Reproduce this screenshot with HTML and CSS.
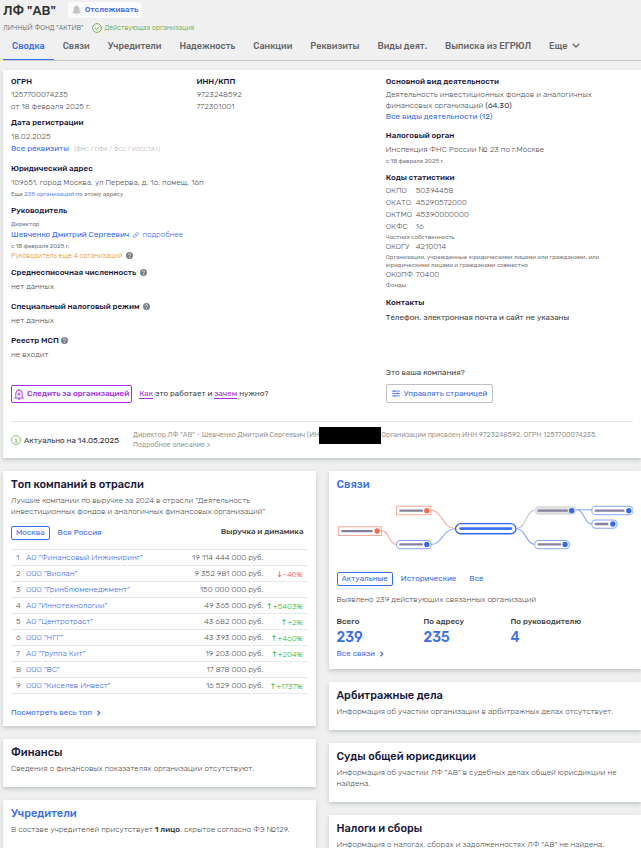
FILE: index.html
```html
<!DOCTYPE html>
<html lang="ru">
<head>
    <meta charset="UTF-8">
    <meta name="viewport" content="width=device-width, initial-scale=1.0">
    <title>ЛФ "АВ"</title>
    <link rel="stylesheet" href="styles.css">
</head>
<body>

    <!-- Shared icons -->
    <svg class="sprite" aria-hidden="true">
        <symbol id="help" viewBox="0 0 16 16">
            <circle cx="8" cy="8" r="8" fill="#7c828a"/>
            <path d="M5.5 6.2a2.5 2.5 0 1 1 3.6 2.2C8.300 8.800 8 9.100 8 10M8 11.500v1.500" fill="none" stroke="#fff" stroke-width="1.600"/>
        </symbol>
        <symbol id="arrow" viewBox="0 0 8 8">
            <path d="M2 1l3 3-3 3" fill="none" stroke="currentColor" stroke-width="1.500"/>
        </symbol>
    </svg>

    <header class="header">
        <div class="title-row">
            <h1>ЛФ "АВ"</h1>
            <button class="watch-btn" type="button">
                <svg class="icon-bell" viewBox="0 0 16 18"><path d="M8 0.500a1.300 1.300 0 0 1 1.300 1.500C12 2.600 13.300 4.800 13.300 7.500v3.800L15.500 14v.8H.5V14l2.200-2.700V7.500C2.700 4.800 4 2.600 6.700 2A1.300 1.300 0 0 1 8 .5zM6 15.700h4a2 2 0 0 1-4 0z" fill="#c4c4c4"/></svg>
                Отслеживать
            </button>
        </div>
        <div class="status-row">
            <span>ЛИЧНЫЙ ФОНД "АКТИВ"</span>
            <span class="status">
                <svg class="icon-status" viewBox="0 0 20 20" fill="none" stroke="#6cb33f" stroke-width="1.800"><circle cx="10" cy="10" r="8.800"/><path d="M6 10.200l3 2.800 5.500-5.500"/></svg>
                Действующая организация
            </span>
        </div>
    </header>

    <nav class="tabs">
        <a class="active" href="#">Сводка</a>
        <a href="#">Связи</a>
        <a href="#">Учредители</a>
        <a href="#">Надежность</a>
        <a href="#">Санкции</a>
        <a href="#">Реквизиты</a>
        <a href="#">Виды деят.</a>
        <a href="#">Выписка из ЕГРЮЛ</a>
        <a href="#">Еще <svg class="icon-chevron" viewBox="0 0 16 10"><path d="M1.500 1.500L8 8l6.500-6.500" fill="none" stroke="currentColor" stroke-width="2.600"/></svg></a>
    </nav>

    <main>
        <section class="card summary">
            <div class="summary-grid">
                <div class="summary-left">
                    <div class="ids">
                        <div class="block">
                            <h3>ОГРН</h3>
                            <p>1257700074235</p>
                            <p>от 18 февраля 2025 г.</p>
                        </div>
                        <div class="block">
                            <h3>ИНН/КПП</h3>
                            <p>9723248592</p>
                            <p>772301001</p>
                        </div>
                    </div>
                    <div class="block">
                        <h3>Дата регистрации</h3>
                        <p>18.02.2025</p>
                        <p class="requisites"><a href="#">Все реквизиты</a> <small>(ФНС / ПФР / ФСС / РОССТАТ)</small></p>
                    </div>
                    <div class="block tight">
                        <h3>Юридический адрес</h3>
                        <p>109651, город Москва, ул Перерва, д. 16, помещ. 16п</p>
                        <p class="note">Еще <a href="#">235 организаций</a> по этому адресу</p>
                    </div>
                    <div class="block tight">
                        <h3>Руководитель</h3>
                        <p class="note">Директор</p>
                        <p class="head-person">
                            <a href="#">Шевченко Дмитрий Сергеевич</a>
                            <a class="more" href="#"><svg class="icon-link" viewBox="0 0 16 16" fill="none" stroke="currentColor" stroke-width="1.800"><path d="M6.500 9.500a3 3 0 0 0 4.300 0l3-3a3 3 0 0 0-4.300-4.300L8 3.700M9.500 6.500a3 3 0 0 0-4.300 0l-3 3a3 3 0 0 0 4.300 4.300L8 12.300"/></svg> подробнее</a>
                        </p>
                        <p class="note">с 18 февраля 2025 г.</p>
                        <p class="note warn">Руководитель еще 4 организаций <svg class="icon-help"><use href="#help"/></svg></p>
                    </div>
                    <div class="block">
                        <h3>Среднесписочная численность <svg class="icon-help"><use href="#help"/></svg></h3>
                        <p>нет данных</p>
                    </div>
                    <div class="block">
                        <h3>Специальный налоговый режим <svg class="icon-help"><use href="#help"/></svg></h3>
                        <p>нет данных</p>
                    </div>
                    <div class="block">
                        <h3>Реестр МСП <svg class="icon-help close"><use href="#help"/></svg></h3>
                        <p>не входит</p>
                    </div>
                </div>

                <div class="summary-right">
                    <div class="block activity">
                        <h3>Основной вид деятельности</h3>
                        <p>Деятельность инвестиционных фондов и аналогичных финансовых организаций <span class="dark">(64.30)</span></p>
                        <p><a href="#">Все виды деятельности (12)</a></p>
                    </div>
                    <div class="block tight">
                        <h3>Налоговый орган</h3>
                        <p>Инспекция ФНС России № 23 по г.Москве</p>
                        <p class="note">с 18 февраля 2025 г.</p>
                    </div>
                    <div class="block codes">
                        <h3>Коды статистики</h3>
                        <p><span>ОКПО</span>50394458</p>
                        <p><span>ОКАТО</span>45290572000</p>
                        <p><span>ОКТМО</span>45390000000</p>
                        <p><span>ОКФС</span>16</p>
                        <p class="code-note">Частная собственность</p>
                        <p><span>ОКОГУ</span>4210014</p>
                        <p class="code-note">Организации, учрежденные юридическими лицами или гражданами, или юридическими лицами и гражданами совместно</p>
                        <p><span>ОКОПФ</span>70400</p>
                        <p class="code-note">Фонды</p>
                    </div>
                    <div class="block contacts">
                        <h3>Контакты</h3>
                        <p class="dark">Телефон, электронная почта и сайт не указаны</p>
                    </div>
                </div>

                <div class="follow">
                    <button class="follow-btn" type="button">
                        <svg class="icon-follow" viewBox="0 0 24 28" fill="none" stroke="currentColor" stroke-width="2.400"><path d="M4 22V11a8 8 0 0 1 16 0v11M0 23h24M12 0v3M9 26h6M12 9v8M8 13h8"/></svg>
                        Следить за организацией
                    </button>
                    <p class="dark"><a href="#">Как</a> это работает и <a href="#">зачем</a> нужно?</p>
                </div>
                <div class="manage">
                    <p class="dark">Это ваша компания?</p>
                    <button class="manage-btn" type="button">
                        <svg class="icon-manage" viewBox="0 0 24 20" fill="none" stroke="currentColor" stroke-width="2.400"><path d="M0 3h24M0 10h24M0 17h24M7 0v6M17 7v6M9 14v6"/></svg>
                        Управлять страницей
                    </button>
                </div>
            </div>

            <div class="actual">
                <div class="actual-date">
                    <svg class="icon-info" viewBox="0 0 28 28" fill="none" stroke="#6cb33f" stroke-width="2.200"><circle cx="14" cy="14" r="12.500"/><path d="M11 12h3.500v8M10.500 20h7.500M13 7.500h2.500"/></svg>
                    Актуально на 14.05.2025
                </div>
                <div class="actual-text">
                    <p>Директор ЛФ "АВ" - Шевченко Дмитрий Сергеевич (ИН<span class="redacted"></span>Организации присвоен ИНН 9723248592, ОГРН 1257700074235.</p>
                    <p><a href="#">Подробное описание &gt;</a></p>
                </div>
            </div>
        </section>

        <div class="columns">
            <div class="column">
                <section class="card top">
                    <h2>Топ компаний в отрасли</h2>
                    <p>Лучшие компании по выручке за 2024 в отрасли "Деятельность инвестиционных фондов и аналогичных финансовых организаций"</p>
                    <div class="top-head">
                        <div class="pills">
                            <button class="selected" type="button">Москва</button>
                            <button type="button">Вся Россия</button>
                        </div>
                        <strong>Выручка и динамика</strong>
                    </div>
                    <table>
                        <tr><td>1</td><td><a href="#">АО "Финансовый Инжиниринг"</a></td><td>19 114 444 000 руб.</td><td></td></tr>
                        <tr><td>2</td><td><a href="#">ООО "Виолан"</a></td><td>9 352 981 000 руб.</td><td class="down"><b>↓</b>-40%</td></tr>
                        <tr><td>3</td><td><a href="#">ООО "Гринблюменеджмент"</a></td><td>150 000 000 руб.</td><td></td></tr>
                        <tr><td>4</td><td><a href="#">АО "Иннотехнологии"</a></td><td>49 365 000 руб.</td><td class="up"><b>↑</b>+5403%</td></tr>
                        <tr><td>5</td><td><a href="#">АО "Центротраст"</a></td><td>43 682 000 руб.</td><td class="up"><b>↑</b>+2%</td></tr>
                        <tr><td>6</td><td><a href="#">ООО "НГГ"</a></td><td>43 393 000 руб.</td><td class="up"><b>↑</b>+460%</td></tr>
                        <tr><td>7</td><td><a href="#">АО "Группа Кит"</a></td><td>19 203 000 руб.</td><td class="up"><b>↑</b>+204%</td></tr>
                        <tr><td>8</td><td><a href="#">ООО "ВС"</a></td><td>17 878 000 руб.</td><td></td></tr>
                        <tr><td>9</td><td><a href="#">ООО "Киселев Инвест"</a></td><td>16 529 000 руб.</td><td class="up"><b>↑</b>+1737%</td></tr>
                    </table>
                    <a class="all-link" href="#">Посмотреть весь топ <svg class="icon-arrow"><use href="#arrow"/></svg></a>
                </section>

                <section class="card">
                    <h2>Финансы</h2>
                    <p>Сведения о финансовых показателях организации отсутствуют.</p>
                </section>

                <section class="card">
                    <h2><a href="#">Учредители</a></h2>
                    <p>В составе учредителей присутствует <b>1 лицо</b>, скрытое согласно ФЗ №129.</p>
                </section>
            </div>

            <div class="column">
                <section class="card links">
                    <h2><a href="#">Связи</a></h2>
                    <svg class="graph" viewBox="36 114 888 150" fill="none" stroke-width="3">
                        <g stroke="#f9a99b">
                            <path d="M318 136C352 136 352 191 390 191M170 197C194 197 190 238 213 238"/>
                            <path d="M214 124h103v25H214zM40 185h129v26H40z"/>
                        </g>
                        <g stroke="#82a5fb">
                            <path d="M318 238C352 238 352 191 390 191M573 191C602 191 602 238 628 238M752 134H799M752 134C779 134 775 177 799 177"/>
                            <rect x="214" y="226" width="104" height="25" rx="12"/>
                            <rect x="628" y="226" width="104" height="25" rx="12"/>
                            <rect x="799" y="124" width="124" height="25" rx="12"/>
                            <rect x="799" y="165" width="76" height="25" rx="12"/>
                        </g>
                        <path d="M573 191C602 191 602 136 628 136" stroke="#bdbdbd"/>
                        <rect x="628" y="123" width="125" height="27" rx="13" fill="#e0e0e0"/>
                        <rect x="391" y="176" width="181" height="30" rx="15" stroke="#3367f0" stroke-width="4"/>
                        <path d="M406 191H557" stroke="#3f70ee" stroke-width="8" stroke-linecap="round"/>
                        <path d="M226 137H290M52 198H140M226 238H290M640 137H724M640 238H704M811 137H894M811 177H846" stroke="#85819a" stroke-width="7" stroke-linecap="round"/>
                        <g fill="#f9694d">
                            <circle cx="305" cy="137" r="8"/>
                            <circle cx="156" cy="198" r="8"/>
                        </g>
                        <g fill="#3367f0">
                            <circle cx="305" cy="238" r="8"/>
                            <circle cx="739" cy="137" r="8"/>
                            <circle cx="719" cy="238" r="8"/>
                            <circle cx="910" cy="137" r="8"/>
                            <circle cx="862" cy="177" r="8"/>
                        </g>
                    </svg>
                    <div class="pills">
                        <button class="selected" type="button">Актуальные</button>
                        <button type="button">Исторические</button>
                        <button type="button">Все</button>
                    </div>
                    <p>Выявлено 239 действующих связанных организаций</p>
                    <div class="counts">
                        <div><strong>Всего</strong><a href="#">239</a></div>
                        <div><strong>По адресу</strong><a href="#">235</a></div>
                        <div><strong>По руководителю</strong><a href="#">4</a></div>
                    </div>
                    <a class="all-link" href="#">Все связи <svg class="icon-arrow"><use href="#arrow"/></svg></a>
                </section>

                <section class="card">
                    <h2>Арбитражные дела</h2>
                    <p>Информация об участии организации в арбитражных делах отсутствует.</p>
                </section>

                <section class="card">
                    <h2>Суды общей юрисдикции</h2>
                    <p>Информация об участии ЛФ "АВ" в судебных делах общей юрисдикции не найдена.</p>
                </section>

                <section class="card">
                    <h2>Налоги и сборы</h2>
                    <p>Информация о налогах, сборах и задолженностях ЛФ "АВ" не найдена.</p>
                </section>
            </div>
        </div>
    </main>

</body>
</html>
```

FILE: styles.css
```css
* {
    box-sizing: border-box;
}
body {
    margin: 0;
    padding-left: 3px;
    background: #f0f0f0;
    color: #505050;
    font-family: Rubik, Roboto, sans-serif;
    font-size: 8px;
    font-weight: 300;
    line-height: 11px;
}
h1, h2, h3, p {
    margin: 0;
}
a {
    color: #3a6df0;
    font-weight: 400;
    text-decoration: none;
}
button {
    font-family: inherit;
    font-size: 8px;
    line-height: 12px;
    cursor: pointer;
}
svg {
    flex: none;
}
.sprite {
    position: absolute;
    width: 0;
    height: 0;
}
.dark {
    color: #444;
    font-weight: 400;
}

/* Header */
.title-row {
    display: flex;
    align-items: center;
    gap: 12px;
    padding-top: 2px;
}
h1 {
    color: #333;
    font-size: 13px;
    line-height: 13px;
    font-weight: 500;
}
.watch-btn {
    display: flex;
    align-items: center;
    gap: 4px;
    padding: 2px 4px;
    border: 0;
    border-radius: 2px;
    background: #fafafa;
    color: #3a6df0;
    font-weight: 500;
}
.icon-bell {
    width: 9px;
    height: 10px;
}
.status-row {
    display: flex;
    gap: 9px;
    margin-top: 4px;
    font-size: 7px;
}
.status {
    display: flex;
    align-items: center;
    gap: 2px;
    color: #58a42a;
}
.icon-status {
    width: 10px;
    height: 10px;
}

/* Tabs */
.tabs {
    display: flex;
    margin-top: 6px;
    border-bottom: 1px solid #c8c8c8;
}
.tabs a {
    padding: 1px 9px 7px;
    color: #666;
    font-size: 9px;
    line-height: 12px;
    font-weight: 500;
    white-space: nowrap;
}
.tabs .active {
    color: #3a6df0;
    border-bottom: 1px solid #3a6df0;
}
.icon-chevron {
    width: 8px;
    height: 5px;
    margin: 0 0 1px 3px;
}

/* Cards */
.card {
    background: #fff;
    padding: 7px 8px 13px;
    box-shadow: 0 2px 4px rgba(60, 80, 90, 0.25);
}
h2 {
    margin-bottom: 4px;
    color: #17173a;
    font-size: 11px;
    line-height: 13px;
    font-weight: 500;
}
h2 a {
    font-weight: 500;
}

/* Summary */
.summary {
    margin-top: 9px;
    padding: 6px 8px 8px;
}
.summary-grid {
    display: grid;
    grid-template-columns: 3fr 2fr;
    column-gap: 4px;
}
.ids {
    display: grid;
    grid-template-columns: 1fr 1fr;
    margin-bottom: -4px;
}
.block {
    margin-bottom: 8px;
    line-height: 12px;
}
.block.tight {
    margin-bottom: 6px;
}
h3 {
    margin-bottom: 2px;
    color: #17173a;
    font-size: 8px;
    line-height: 12px;
    font-weight: 500;
}
.ids h3, .activity h3, .codes h3 {
    margin-bottom: 1px;
}
.requisites small {
    margin-left: 3px;
    color: #aaa;
    font-size: 6px;
}
.note, .code-note {
    color: #777;
    font-size: 6px;
    font-weight: 400;
    line-height: 10px;
}
.note a {
    color: #668cf2;
}
.note.warn {
    color: #e0903a;
    font-size: 7px;
    font-weight: 300;
}
.icon-help {
    width: 7px;
    height: 7px;
    margin-left: 2px;
    vertical-align: -1px;
}
.icon-help.close {
    margin-left: 0;
}
.icon-link {
    width: 6px;
    height: 6px;
    margin: 0 1px 0 2px;
    vertical-align: -1px;
}
.more {
    font-weight: 300;
}
.activity p {
    line-height: 11px;
}
.codes span {
    display: inline-block;
    width: 30px;
}
.code-note {
    line-height: 8px;
}
.contacts h3 {
    margin-bottom: 3px;
}
.follow {
    display: flex;
    align-items: flex-end;
    gap: 7px;
}
.follow p {
    padding-bottom: 4px;
}
.follow a {
    color: #a72ee6;
    border-bottom: 1px solid #a72ee6;
}
.follow-btn {
    display: flex;
    align-items: center;
    gap: 3px;
    padding: 2px;
    border: 1px solid #a72ee6;
    border-radius: 2px;
    background: #fff;
    color: #a72ee6;
    font-weight: 500;
}
.icon-follow {
    width: 10px;
    height: 11px;
}
.manage {
    padding-top: 1px;
}
.summary-left .block:last-child {
    margin-bottom: 5px;
}
.manage-btn {
    display: flex;
    align-items: center;
    gap: 4px;
    margin-top: 6px;
    padding: 2px 5px;
    border: 1px solid #c0c0c0;
    border-radius: 2px;
    background: #fff;
    color: #3a6df0;
    line-height: 13px;
}
.icon-manage {
    width: 8px;
    height: 7px;
}
.summary-left .ids .block:last-child {
    margin-bottom: 8px;
}
.actual {
    display: flex;
    align-items: center;
    gap: 14px;
    margin-top: 18px;
    padding-top: 8px;
    border-top: 1px solid #e3e6f0;
}
.actual-date {
    display: flex;
    align-items: center;
    gap: 3px;
    color: #333;
    font-weight: 400;
    white-space: nowrap;
}
.icon-info {
    width: 10px;
    height: 10px;
}
.actual-text, .actual-text a {
    color: #999;
    font-size: 7px;
    font-weight: 400;
    line-height: 10px;
}
.redacted {
    display: inline-block;
    width: 62px;
    height: 17px;
    margin: -4px 0;
    background: #000;
    vertical-align: middle;
}

/* Lower cards */
.columns {
    display: grid;
    grid-template-columns: 1fr 1fr;
    gap: 13px;
    margin-top: 13px;
}
.column {
    display: flex;
    flex-direction: column;
    gap: 13px;
}
.card b {
    color: #333;
    font-weight: 500;
}
.top-head {
    display: flex;
    justify-content: space-between;
    margin: 9px 4px 9px 0;
}
strong {
    color: #444;
    font-weight: 500;
}
.pills {
    display: flex;
    gap: 3px;
}
.pills button {
    padding: 0 4px;
    border: 1px solid transparent;
    border-radius: 2px;
    background: #fff;
    color: #3a6df0;
}
.pills .selected {
    border-color: #3a6df0;
}
.top {
    padding-bottom: 8px;
}
table {
    width: calc(100% - 1px);
    border-collapse: collapse;
    border-top: 1px solid #e8e8e8;
}
td {
    height: 16px;
    padding: 0;
    border-bottom: 1px solid #e8e8e8;
    white-space: nowrap;
}
td:first-child {
    width: 14px;
    padding: 0 5px;
}
td:nth-child(3), td:nth-child(4) {
    text-align: right;
}
td:nth-child(4) {
    width: 43px;
    padding-right: 4px;
}
td a {
    font-weight: 300;
}
td b {
    font-family: "Noto Sans", "DejaVu Sans", sans-serif;
}
.down, .card .down b {
    color: #f4513d;
}
.up, .card .up b {
    color: #22b838;
}
.all-link {
    display: block;
}
.top .all-link {
    margin-top: 13px;
}
.icon-arrow {
    width: 6px;
    height: 6px;
    margin-left: 2px;
    vertical-align: -1px;
}
.links {
    padding-bottom: 10px;
}
.graph {
    display: block;
    width: 100%;
    margin: 12px 0 19px;
}
.links p {
    margin-top: 8px;
}
.counts {
    display: grid;
    grid-template-columns: 87px 87px 1fr;
    margin: 11px 0 2px;
}
.counts a {
    display: block;
    margin-top: 3px;
    font-size: 14px;
    line-height: 16px;
    font-weight: 500;
}
```
